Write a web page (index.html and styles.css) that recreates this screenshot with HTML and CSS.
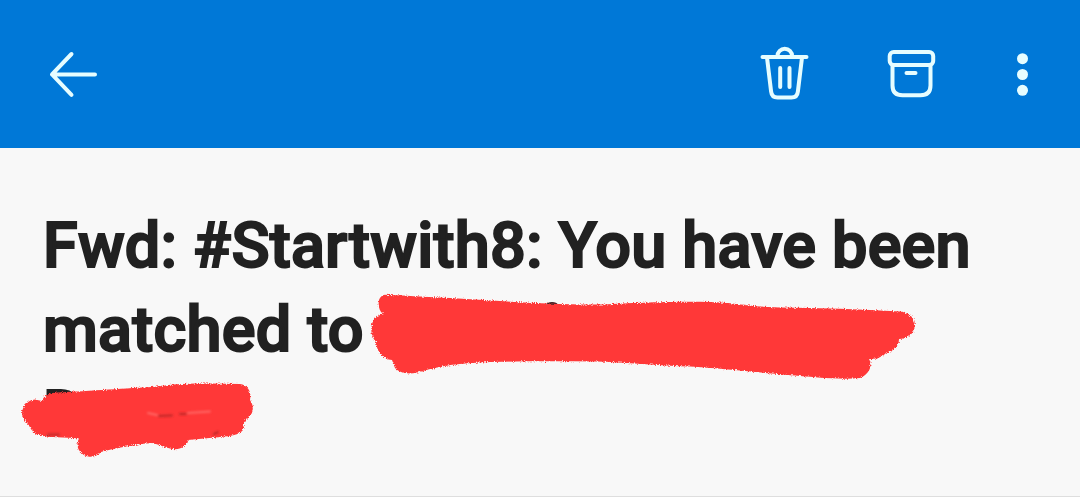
FILE: index.html
```html
<!DOCTYPE html>
<html lang="en">
<head>
    <meta charset="UTF-8">
    <title>Message</title>
    <link rel="stylesheet" href="styles.css">
</head>
<body>
    <header class="toolbar">
        <svg class="icon back" viewBox="0 0 56 56">
            <path d="M29.500 8L10 28.400L29.500 48.800M10 28.400H53"/>
        </svg>
        <div class="actions">
            <svg class="icon" viewBox="0 0 56 56">
                <path d="M5.500 11H49.500M20.500 10.500V10a7.300 7.300 0 0 1 14.600 0v.500"/>
                <path d="M10 11.500L14.100 45.500q.600 6 6.400 6H34.500q5.800 0 6.400-6L45 11.500M23.200 22V41M32.500 22V41"/>
            </svg>
            <svg class="icon" viewBox="0 0 56 56">
                <rect x="5.700" y="6" width="43.500" height="13" rx="4"/>
                <path d="M8.500 19V39.500Q8.500 49.300 18.500 49.300H36.500Q46.500 49.300 46.500 39.500V19M22.500 26.900H31.500"/>
            </svg>
            <svg class="icon dots" viewBox="0 0 56 56">
                <circle cx="27.500" cy="12.700" r="5.500"/>
                <circle cx="27.500" cy="28.500" r="5.500"/>
                <circle cx="27.500" cy="44.300" r="5.500"/>
            </svg>
        </div>
    </header>

    <main class="message">
        <h1 class="subject">Fwd: #Startwith8: You have been<br>matched to<br>D</h1>
        <!-- marker over the name -->
        <svg class="marker" viewBox="0 148 1080 348">
            <defs>
                <filter id="rough" x="-5%" y="-10%" width="110%" height="120%">
                    <feTurbulence type="fractalNoise" baseFrequency="0.9" numOctaves="2" seed="4"/>
                    <feDisplacementMap in="SourceGraphic" scale="4" xChannelSelector="R" yChannelSelector="G"/>
                    <feGaussianBlur stdDeviation="0.6"/>
                </filter>
                <filter id="smudge">
                    <feGaussianBlur stdDeviation="1"/>
                </filter>
            </defs>
            <ellipse class="ink" cx="552" cy="304.500" rx="5.500" ry="2.500"/>
            <g class="strokes">
                <path d="M385 294.700C410 296 455 298 500 301C530 303 570 305 605 304.500C630 303 675 301 710 302C740 303 750 307 780 307.500C820 308 860 309 900 311.500C911 313 915 319 915 326C914 334 907 339 899 339C899 346 894 351 886 353C881 358 876 359 869 359C873 366 869 374 860 378C840 380 815 377 787 375C745 371 715 368 690 366.500C660 366 625 362 595 361.500C560 361 525 361 490 362C460 363 439 366 423 371C412 375 400 374 395 368L392 360C383 359 377 353 376 342C371 337 370 329 373 321C375 317 379 315 383 314C379 311 378 305 379 300C380 297 382 295 385 294.700Z"/>
                <path d="M22 414C22 406 28 400 35 399.500L42 401C44 395 49 393 57 392.500C90 391 130 388 152 387C173 384 190 383 210 383.500L240 384C247 385 252 391 250 400C255 407 253 415 247 419C243 422 244 426 243 430C239 435 231 436 220 437L188 440C187 446 180 450 173 449C165 448 158 444 152 443C136 444 116 448 101 452C98 456 91 458 86 456C79 453 75 446 79 438.500C65 437 49 438 38 435C31 432 30 426 27 423Q23 420 22 414Z"/>
            </g>
            <g class="smudges">
                <path class="light" d="M148 413L157 415M188 413L210 411.500"/>
                <path class="dark" d="M159 416L172 415.500M180 414H186M214 434L218 432M48 434.500H59"/>
            </g>
        </svg>
    </main>
</body>
</html>
```
FILE: styles.css
```css
body {
    margin: 0;
    background: #fff;
    font-family: Roboto, "Liberation Sans", sans-serif;
}

.toolbar {
    display: flex;
    justify-content: space-between;
    align-items: center;
    box-sizing: border-box;
    height: 148px;
    padding: 0 29px 0 42px;
    background: #0078d7;
}
.actions {
    display: flex;
    gap: 71px;
}
.icon {
    display: block;
    width: 56px;
    height: 56px;
    fill: none;
    stroke: #e6fdff;
    stroke-width: 4;
    stroke-linecap: round;
    stroke-linejoin: round;
}
.dots {
    fill: #e6fdff;
    stroke: none;
    margin-left: -16px;
}

.message {
    position: relative;
    box-sizing: border-box;
    height: 349px;
    padding: 56px 43px 0;
    background: #f8f8f8;
    border-bottom: 1px solid #dedede;
}
.subject {
    margin: 0;
    font-size: 63px;
    line-height: 84px;
    font-weight: 500;
    letter-spacing: 0.2px;
    color: #212121;
    -webkit-text-stroke: 2px #212121;
    white-space: nowrap;
}

.marker {
    position: absolute;
    top: 0;
    left: 0;
    width: 1080px;
    height: 348px;
}
.ink { fill: #3b2023; }
.strokes {
    fill: #ff3838;
    filter: url(#rough);
}
.smudges {
    fill: none;
    stroke-width: 2;
    stroke-linecap: round;
    filter: url(#smudge);
}
.light { stroke: #ff6865; }
.dark { stroke: #bd2929; }
```
